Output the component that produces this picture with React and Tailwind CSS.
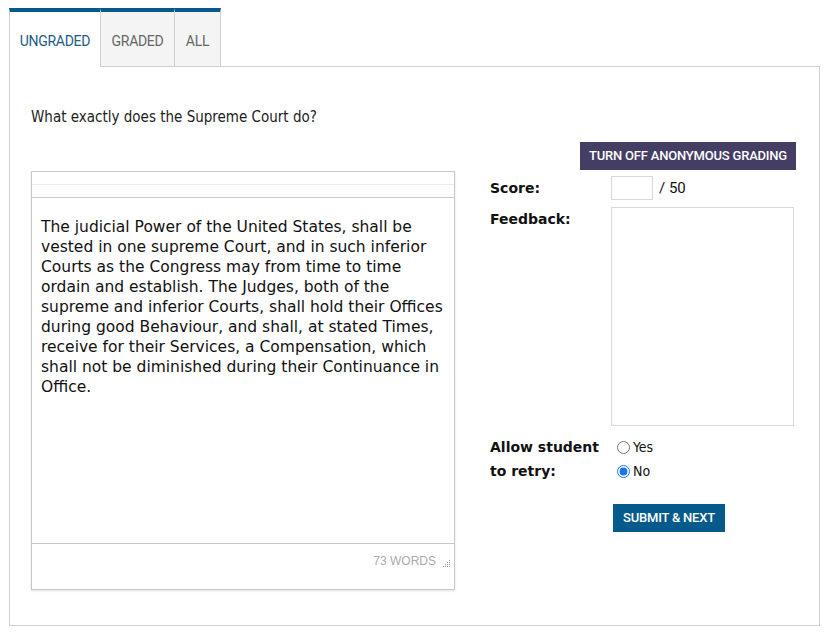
import { useState } from "react";

const essay =
  "The judicial Power of the United States, shall be vested in one supreme Court, and in such inferior Courts as the Congress may from time to time ordain and establish. The Judges, both of the supreme and inferior Courts, shall hold their Offices during good Behaviour, and shall, at stated Times, receive for their Services, a Compensation, which shall not be diminished during their Continuance in Office.";

const cond = { fontFamily: "Roboto, 'Liberation Sans', sans-serif" };
const tahoma = { fontFamily: "'DejaVu Sans Condensed', 'Noto Sans', sans-serif" };

export default function App() {
  const [tab, setTab] = useState("UNGRADED");
  const [retry, setRetry] = useState("no");

  return (
    <div className="w-[828px] h-[634px] bg-white pt-2 pl-[9px] pr-[8px]">
      {/* Tabs */}
      <div className="flex h-[59px]">
        {["UNGRADED", "GRADED", "ALL"].map((t) => {
          const active = tab === t;
          return (
            <button
              key={t}
              onClick={() => setTab(t)}
              style={cond}
              className={`border-t-4 border-t-[#055a8c] border-r border-r-[#d0d0d0] text-[14px] tracking-[-0.3px] pt-[4px] ${
                active
                  ? "bg-white text-[#1b5b86] border-l border-l-[#d0d0d0] w-[92px]"
                  : "bg-[#f4f4f4] text-[#666] border-b border-b-[#d0d0d0] " +
                    (t === "GRADED" ? "w-[74px]" : "w-[46px]")
              }`}
            >
              {t}
            </button>
          );
        })}
        <div className="flex-1 border-b border-[#d0d0d0]" />
      </div>

      {/* Panel */}
      <div className="h-[559px] border-x border-b border-[#d0d0d0] px-[21px] pt-[40px]">
        <p className="text-[15px] leading-[20px] text-[#222]" style={tahoma}>
          What exactly does the Supreme Court do?
        </p>

        <div className="flex justify-end mt-[15px] pr-[2px]">
          <button
            style={cond}
            className="bg-[#453e64] text-white text-[13px] font-medium h-7 w-[216px] tracking-[-0.2px]"
          >
            TURN OFF ANONYMOUS GRADING
          </button>
        </div>

        <div className="flex gap-[35px] mt-[1px]">
          {/* Essay */}
          <div className="w-[424px] h-[419px] border border-[#c8c8c8] shadow-[0_1px_2px_rgba(0,0,0,0.12)] flex flex-col">
            <div className="h-[13px] border-b border-[#ebebeb]" />
            <div className="h-[13px] border-b border-[#c8c8c8]" />
            <div
              className="flex-1 px-[9px] pt-[19px] text-[15.5px] leading-[20px] text-[#111]"
              style={{ fontFamily: "'DejaVu Sans', Verdana, sans-serif" }}
            >
              {essay}
            </div>
            <div className="h-[46px] border-t border-[#c8c8c8] flex justify-end items-start pt-[8px] pr-[18px] relative">
              <span
                className="text-[12px] text-[#aaa]"
                style={{ fontFamily: "'Liberation Sans', Arial, sans-serif" }}
              >
                73 WORDS
              </span>
              <svg
                className="absolute right-[3px] top-[15px]"
                width="9"
                height="9"
                viewBox="0 0 9 9"
              >
                {[
                  [7, 1],
                  [5, 3], [7, 3],
                  [3, 5], [5, 5], [7, 5],
                  [1, 7], [3, 7], [5, 7], [7, 7],
                ].map(([x, y]) => (
                  <rect key={`${x}-${y}`} x={x} y={y} width="1" height="1" fill="#9a9a9a" />
                ))}
              </svg>
            </div>
          </div>

          {/* Grading */}
          <div
            className="flex-1 text-[14px] text-[#111]"
            style={{ fontFamily: "'DejaVu Sans', Verdana, sans-serif" }}
          >
            <div className="flex items-center mt-[5px]">
              <span className="w-[121px] font-bold">Score:</span>
              <input className="w-[42px] h-[24px] border border-[#d8d8d8] outline-none" />
              <span className="ml-[6px] text-[15px]" style={cond}>
                / 50
              </span>
            </div>
            <div className="flex mt-[7px]">
              <span className="w-[121px] font-bold pt-[2px]">Feedback:</span>
              <textarea className="w-[183px] h-[219px] border border-[#d8d8d8] outline-none resize-none" />
            </div>
            <div className="flex mt-[9px] leading-[24px]">
              <span className="w-[127px] font-bold">
                Allow student
                <br />
                to retry:
              </span>
              <div className="flex flex-col">
                <label className="flex items-center gap-[3px]">
                  <input
                    type="radio"
                    name="retry"
                    checked={retry === "yes"}
                    onChange={() => setRetry("yes")}
                    className="m-0 w-[13px] h-[13px]"
                  />
                  <span style={tahoma}>Yes</span>
                </label>
                <label className="flex items-center gap-[3px]">
                  <input
                    type="radio"
                    name="retry"
                    checked={retry === "no"}
                    onChange={() => setRetry("no")}
                    className="m-0 w-[13px] h-[13px] accent-[#1a73e8]"
                  />
                  <span style={tahoma}>No</span>
                </label>
              </div>
            </div>
            <div className="mt-[21px] pl-[123px]">
              <button
                style={cond}
                className="bg-[#055a8c] text-white text-[13px] font-medium h-7 w-[112px] tracking-[-0.2px]"
              >
                SUBMIT &amp; NEXT
              </button>
            </div>
          </div>
        </div>
      </div>
    </div>
  );
}
